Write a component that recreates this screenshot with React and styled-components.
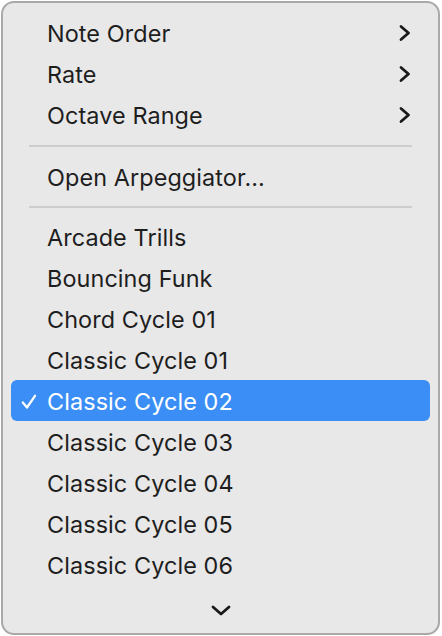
import styled, { createGlobalStyle } from 'styled-components'

const GlobalStyle = createGlobalStyle`
  html, body {
    margin: 0;
    padding: 0;
    background: #ffffff;
  }
  body {
    font-family: Inter, "Noto Sans", "Liberation Sans", sans-serif;
    -webkit-font-smoothing: antialiased;
  }
`

const submenus = ['Note Order', 'Rate', 'Octave Range']
const patterns = [
  'Arcade Trills',
  'Bouncing Funk',
  'Chord Cycle 01',
  'Classic Cycle 01',
  'Classic Cycle 02',
  'Classic Cycle 03',
  'Classic Cycle 04',
  'Classic Cycle 05',
  'Classic Cycle 06',
]
const selected = 'Classic Cycle 02'

const ChevronRight = () => (
  <svg width="14" height="18" viewBox="0 0 14 18" fill="none">
    <path d="M3 2.5 L10.5 9 L3 15.5" stroke="#1a1a1a" strokeWidth="2.8" strokeLinecap="round" strokeLinejoin="round" />
  </svg>
)

const ChevronDown = () => (
  <svg width="22" height="14" viewBox="0 0 22 14" fill="none">
    <path d="M3 3 L11 10 L19 3" stroke="#1a1a1a" strokeWidth="2.8" strokeLinecap="round" strokeLinejoin="round" />
  </svg>
)

const Check = () => (
  <svg width="16" height="16" viewBox="0 0 16 16" fill="none">
    <path d="M1.8 8.5 L6 13.5 L14 1.8" stroke="#ffffff" strokeWidth="2.3" strokeLinecap="round" strokeLinejoin="round" />
  </svg>
)

const App = () => {
  return (
    <>
      <GlobalStyle />
      <Menu>
        {submenus.map((label) => (
          <Item key={label}>
            <Label>{label}</Label>
            <Arrow>
              <ChevronRight />
            </Arrow>
          </Item>
        ))}
        <Separator $h={21} />
        <Item>
          <Label>Open Arpeggiator...</Label>
        </Item>
        <Separator $h={19} />
        {patterns.map((label) => {
          const active = label === selected
          return (
            <Item key={label} $active={active}>
              {active && (
                <Tick>
                  <Check />
                </Tick>
              )}
              <Label>{label}</Label>
            </Item>
          )
        })}
        <More>
          <ChevronDown />
        </More>
      </Menu>
    </>
  )
}

const Menu = styled.div`
  box-sizing: border-box;
  margin: 1px 0 0 1px;
  width: 439px;
  height: 634px;
  border: 2px solid #a9a9a9;
  border-radius: 13px;
  background: #e8e8e8;
  padding: 9px 8px 0 8px;
  display: flex;
  flex-direction: column;
  overflow: hidden;
`

const Item = styled.div`
  position: relative;
  height: 41px;
  flex-shrink: 0;
  display: flex;
  align-items: center;
  padding: 0 18px 0 36px;
  border-radius: 6px;
  background: ${(p) => (p.$active ? '#3a8ef5' : 'transparent')};
  color: ${(p) => (p.$active ? '#ffffff' : '#1e1e1e')};
`

const Label = styled.span`
  flex: 1;
  font-size: 23.4px;
  line-height: 39px;
  padding-top: 2px;
  letter-spacing: 0.1px;
  white-space: nowrap;
`

const Arrow = styled.span`
  display: flex;
  align-items: center;
`

const Tick = styled.span`
  position: absolute;
  left: 10px;
  top: 14px;
  display: flex;
`

const Separator = styled.div`
  height: ${(p) => p.$h}px;
  flex-shrink: 0;
  display: flex;
  align-items: center;
  padding: 0 18px;
  &::after {
    content: '';
    flex: 1;
    height: 2px;
    background: #cdcdcd;
  }
`

const More = styled.div`
  flex: 1;
  display: flex;
  justify-content: center;
  align-items: center;
  padding-top: 4px;
`

export default App
